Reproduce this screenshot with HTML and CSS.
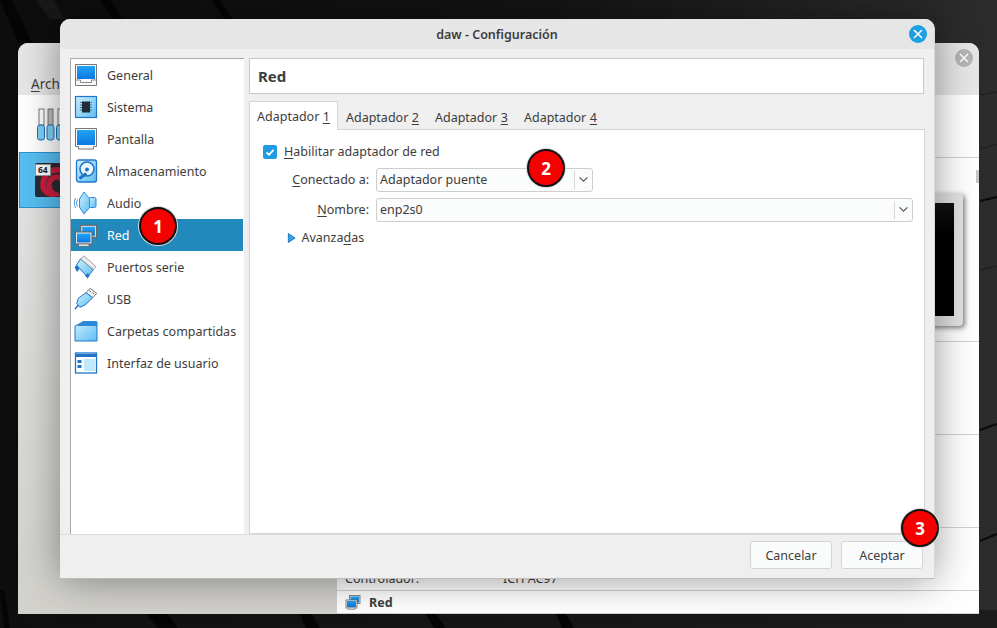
FILE: index.html
```html
<!DOCTYPE html>
<html lang="es">
<head>
<meta charset="utf-8">
<title>daw - Configuración</title>
<link rel="stylesheet" href="styles.css">
</head>
<body>
<svg class="wallpaper" viewBox="0 0 997 628" preserveAspectRatio="none" aria-hidden="true">
  <defs>
    <linearGradient id="wall" x1="0" y1="0" x2="1" y2="0"><stop offset="0" stop-color="#0d0d0d"/><stop offset=".55" stop-color="#141414"/><stop offset=".9" stop-color="#282828"/><stop offset="1" stop-color="#2c2c2c"/></linearGradient>
    <linearGradient id="wallbottom" x1="0" y1="0" x2="1" y2="0"><stop offset="0" stop-color="#0f0f0f"/><stop offset="1" stop-color="#1c1c1c"/></linearGradient>
  </defs>
  <rect width="997" height="628" fill="url(#wall)"/>
  <rect y="610" width="997" height="18" fill="url(#wallbottom)"/>
  <polygon points="0,0 12,0 32,43 18,43" fill="#050505"/>
  <polygon points="36,0 54,0 64,19 50,19" fill="#181818"/>
  <polygon points="100,0 110,0 122,19 112,19" fill="#050505"/>
  <polygon points="212,0 220,0 232,19 224,19" fill="#050505"/>
  <path d="M980 95L997 92M980 149L997 144M980 270L997 266" stroke="#1c1c1c" fill="none"/>
  <path d="M980 201L997 197M980 430L997 424M980 541L997 534" stroke="#0a0a0a" stroke-width="2" fill="none"/>
  <polygon points="146,614 168,614 178,628 158,628" fill="#050505"/>
  <polygon points="300,614 312,614 320,628 306,628" fill="#050505"/>
  <polygon points="426,614 436,614 446,628 434,628" fill="#050505"/>
  <polygon points="556,614 566,614 574,628 562,628" fill="#050505"/>
  <polygon points="0,590 4,590 10,628 4,628" fill="#050505"/>
</svg>

<section class="back-window">
  <div class="back-title"><span class="back-close"><svg viewBox="0 0 18 18"><path d="M5 5l8 8M13 5l-8 8" stroke="#fff" stroke-width="1.500"/></svg></span></div>
  <div class="back-menu"><span class="back-menu-item"><u>A</u>rchivo</span></div>
  <div class="back-body">
    <aside class="back-left">
      <div class="back-tools">
        <svg class="tools-icon" viewBox="0 0 30 36">
          <g fill="#fff" stroke="#777"><rect x="3" y="1" width="5" height="16"/><rect x="12" y="1" width="5" height="16" fill="#bbb"/><rect x="22" y="1" width="5" height="16"/></g>
          <g fill="#7fd0f5" stroke="#1f6fb5"><rect x="1.500" y="17" width="7" height="15" rx="2.500"/><rect x="11" y="17" width="7" height="15" rx="2.500"/><rect x="20.500" y="17" width="7" height="15" rx="2.500"/></g>
        </svg>
      </div>
      <div class="back-vm">
        <div class="vm-icon"><svg viewBox="0 0 30 32" class="vm-swirl"><path d="M24 5C13 3 6 11 6 20c0 6 5 10 11 9-4-2-5-6-5-9 0-5 4-8 8-8s6 3 6 7" fill="none" stroke="#c81e3e" stroke-width="5.500"/></svg><span class="vm-badge">64</span></div>
      </div>
    </aside>
    <main class="back-right">
      <span class="back-scroll"></span>
      <div class="back-row back-row-0"></div>
      <div class="back-row back-row-1"><div class="preview"><div class="preview-screen"></div></div></div>
      <div class="back-row back-row-2"></div>
      <div class="back-row back-row-3"></div>
      <div class="back-row back-row-4"><div class="back-audio"><span>Controlador:</span><span class="back-audio-val">ICH AC97</span></div></div>
      <div class="back-net">
        <svg class="icon-small" viewBox="0 0 32 32"><use href="#net"/></svg>
        <b>Red</b>
      </div>
    </main>
  </div>
</section>

<svg class="defs" aria-hidden="true">
  <defs>
    <linearGradient id="blue" x1="0" y1="0" x2="0" y2="1"><stop offset="0" stop-color="#23a4f4"/><stop offset="1" stop-color="#0a78e0"/></linearGradient>
    <linearGradient id="light" x1="0" y1="0" x2="1" y2="1"><stop offset="0" stop-color="#cdeefd"/><stop offset="1" stop-color="#5cbdf3"/></linearGradient>
    <symbol id="net" viewBox="0 0 32 32">
      <rect x="9" y="3" width="21" height="16" fill="#e8e8e8" stroke="#666" stroke-width="1.500"/>
      <rect x="11" y="5" width="17" height="12" fill="url(#blue)"/>
      <rect x="2" y="12" width="22" height="16" fill="#f2f2f2" stroke="#666" stroke-width="1.500"/>
      <rect x="4" y="14" width="18" height="12" fill="url(#blue)"/>
      <rect x="6" y="28" width="14" height="3" fill="#eee" stroke="#666"/>
    </symbol>
  </defs>
</svg>

<section class="dialog">
  <header class="dialog-title">
    <span>daw - Configuración</span>
    <span class="dialog-close"><svg viewBox="0 0 18 18"><path d="M5 5l8 8M13 5l-8 8" stroke="#fff" stroke-width="1.500"/></svg></span>
  </header>
  <div class="dialog-body">
    <nav class="side">
      <div class="side-item"><svg class="ico" viewBox="0 0 24 24"><path d="M1.500 1.500h21v21h-21z" fill="#f8f8f8" stroke="#777"/><path d="M3 3h18v13H3z" fill="url(#blue)"/><path d="M2 17h4.500v2.500h11V17H22" fill="none" stroke="#888"/></svg>General</div>
      <div class="side-item"><svg class="ico" viewBox="0 0 24 24"><rect x="1.500" y="1.500" width="21" height="21" fill="url(#light)" stroke="#1f76c8" stroke-width="1.200"/><path d="M6 7.500h12M6 10h12M6 12.500h12M6 15h12" stroke="#4f7391"/><rect x="8" y="6.500" width="8" height="11" fill="#222d3c"/></svg>Sistema</div>
      <div class="side-item"><svg class="ico" viewBox="0 0 24 24"><path d="M1.500 1.500h21v18h-3v2.500h-15v-2.500h-3z" fill="#f8f8f8" stroke="#777"/><path d="M3 3h18v15H3z" fill="url(#blue)"/></svg>Pantalla</div>
      <div class="side-item"><svg class="ico" viewBox="0 0 24 24"><rect x="2.500" y="1" width="20" height="22" rx="2" fill="url(#light)" stroke="#1f76c8" stroke-width="1.300"/><circle cx="13" cy="10" r="7" fill="#eaf8fe" stroke="#1f76c8" stroke-width="1.600"/><circle cx="13" cy="10.500" r="2" fill="#1f76c8"/><path d="M5.500 19.500l7-5" stroke="#1f76c8" stroke-width="3"/></svg>Almacenamiento</div>
      <div class="side-item"><svg class="ico" viewBox="0 0 24 24"><rect x="15" y="6.500" width="7" height="10" rx="1.500" fill="url(#light)" stroke="#2a8ad8"/><path d="M5.500 8L10 1l5.500 6.500v9L10 23l-4.500-7z" fill="url(#light)" stroke="#2a8ad8"/><path d="M3.500 8.500c-1.200 2-1.200 5 0 7M1.500 7c-1.500 3-1.500 7 0 10" fill="none" stroke="#2a8ad8" stroke-width=".9"/></svg>Audio</div>
      <div class="side-item is-active"><svg class="ico" viewBox="0 0 32 32"><use href="#net"/></svg>Red</div>
      <div class="side-item"><svg class="ico" viewBox="0 0 24 24"><path d="M6.500 4L19.500 14.500 13.500 22 2.500 10z" fill="url(#light)" stroke="#1f76c8"/><path d="M10 .8L22 11.700l-2.700 2.700L6.700 4z" fill="#eee" stroke="#888" stroke-width=".8"/><path d="M.5 12l2.500-2 2.500 4-2.500 3zM11 20.500l3-2.500 1.500 3-2 2.500z" fill="#1f76c8"/></svg>Puertos serie</div>
      <div class="side-item"><svg class="ico" viewBox="0 0 24 24"><path d="M16 1.300l6.700 5-4 4.400-6.700-5z" fill="#f2f2f2" stroke="#777"/><path d="M15.500 3.800l1.300 1M18.500 5.800l1.300 1" stroke="#444"/><path d="M12 5.700l6.700 5L11 18l-5 2.300-3.300-4 1.600-5z" fill="url(#light)" stroke="#1f76c8"/><path d="M4 18.500L1 22" stroke="#1f76c8" stroke-width="1.600"/></svg>USB</div>
      <div class="side-item"><svg class="ico" viewBox="0 0 24 24"><path d="M1 7l8-4h14v19H1z" fill="url(#light)" stroke="#1f76c8"/><path d="M9 2h14v5H3z" fill="#2a8ad8"/></svg>Carpetas compartidas</div>
      <div class="side-item"><svg class="ico" viewBox="0 0 24 24"><rect x="1.500" y="2" width="21" height="20" fill="#fff" stroke="#1f76c8" stroke-width="1.300"/><rect x="2" y="3" width="20" height="3" fill="#1f76c8"/><rect x="10" y="8" width="11" height="12" fill="#bfe8fb"/><path d="M3.500 9h4v3h-4zM3.500 14h4v3h-4z" fill="#1f76c8"/></svg>Interfaz de usuario</div>
    </nav>
    <div class="content">
      <h1 class="page-title">Red</h1>
      <div class="tabs">
        <span class="tab is-active">Adaptador <u>1</u></span>
        <span class="tab">Adaptador <u>2</u></span>
        <span class="tab">Adaptador <u>3</u></span>
        <span class="tab">Adaptador <u>4</u></span>
      </div>
      <div class="panel">
        <label class="check-row">
          <span class="check"><svg viewBox="0 0 14 14"><path d="M3.500 7.500l2.500 2.300 4.500-5" fill="none" stroke="#fff" stroke-width="1.800"/></svg></span>
          <span><u>H</u>abilitar adaptador de red</span>
        </label>
        <div class="form-row">
          <span class="form-label"><u>C</u>onectado a:</span>
          <div class="select select-short"><span class="select-inner">Adaptador puente</span><span class="caret"><svg viewBox="0 0 12 8"><path d="M1.500 1.500L6 6l4.500-4.500" fill="none" stroke="#555" stroke-width="1.300"/></svg></span></div>
        </div>
        <div class="form-row">
          <span class="form-label"><u>N</u>ombre:</span>
          <div class="select select-long"><span class="select-inner">enp2s0</span><span class="caret"><svg viewBox="0 0 12 8"><path d="M1.500 1.500L6 6l4.500-4.500" fill="none" stroke="#555" stroke-width="1.300"/></svg></span></div>
        </div>
        <div class="advanced"><svg class="tri" viewBox="0 0 10 12"><path d="M1.500 1l7.500 5-7.500 5z" fill="#35a4ef" stroke="#1c6fc0"/></svg><span>Avanza<u>d</u>as</span></div>
      </div>
    </div>
  </div>
  <footer class="dialog-foot">
    <button class="btn">Cancelar</button>
    <button class="btn">Aceptar</button>
  </footer>
</section>

<span class="badge badge-1">1</span>
<span class="badge badge-2">2</span>
<span class="badge badge-3">3</span>
</body>
</html>
```
FILE: styles.css
```css
* { box-sizing: border-box; }
html, body { margin: 0; height: 100%; }
body {
  width: 997px;
  height: 628px;
  position: relative;
  overflow: hidden;
  background: #121212;
  font-family: "Noto Sans", "Open Sans", sans-serif;
  font-size: 12.5px;
  color: #3d3d3d;
}
u { text-underline-offset: 2px; }
.defs { position: absolute; width: 0; height: 0; }
.wallpaper { position: absolute; inset: 0; width: 997px; height: 628px; }

.back-window {
  position: absolute;
  left: 18px;
  top: 43px;
  width: 961px;
  height: 571px;
  display: flex;
  flex-direction: column;
  border-radius: 10px 10px 0 0;
  overflow: hidden;
  background: #e6e6e6;
}
.back-title { height: 30px; position: relative; background: #e6e6e6; }
.back-close {
  position: absolute; right: 6px; top: 6px; width: 18px; height: 18px; border-radius: 50%;
  background: #b5b5b5;
}
.back-close svg { display: block; }
.back-menu { height: 22px; padding-left: 13px; background: #e6e6e6; font-size: 13.5px; line-height: 22px; }
.back-menu-item { white-space: nowrap; }
.back-body { flex: 1; display: flex; min-height: 0; }
.back-left { width: 319px; display: flex; flex-direction: column; background: linear-gradient(#e6e6e6, #d2d1cc); }
.back-tools { height: 57px; background: #fff; padding: 13px 0 0 18px; }
.tools-icon { display: block; width: 30px; height: 36px; }
.back-vm { height: 56px; margin-left: 1px; background: #58bff1; border: 1px solid #2f8fd0; padding: 10px 0 0 15px; }
.vm-icon { position: relative; width: 34px; height: 34px; background: #2b2b33; border-radius: 2px; }
.vm-badge {
  position: absolute; left: 0; top: 1px; background: #fff; color: #222; font-size: 8.5px; font-weight: 700;
  line-height: 10px; padding: 0 2px; border: 1px solid #999;
}
.vm-swirl { position: absolute; left: 2px; top: 2px; width: 30px; height: 32px; }
.back-right { flex: 1; min-width: 0; display: flex; flex-direction: column; background: #fff; position: relative; }
.back-scroll { position: absolute; right: 0; top: 75px; width: 3px; height: 13px; background: #c8c8c8; }
.back-row { border-bottom: 1px solid #d2d2d2; flex: none; background: #fff; }
.back-row-0 { height: 63px; }
.back-row-1 { height: 184px; display: flex; justify-content: flex-end; align-items: flex-end; padding: 0 16px 15px 0; }
.back-row-2 { height: 93px; }
.back-row-3 { height: 93px; }
.back-row-4 { height: 63px; display: flex; align-items: flex-end; padding-bottom: 4px; }
.back-audio { padding-left: 8px; display: flex; line-height: 14px; }
.back-audio span:first-child { width: 158px; }
.preview {
  width: 180px; height: 133px; background: #e2e2e2; border-radius: 4px;
  box-shadow: 2px 2px 5px rgba(0,0,0,.5); padding: 10px 9px 10px 10px;
}
.preview-screen { height: 100%; background: linear-gradient(#111, #000 30%); }
.back-net { display: flex; align-items: center; gap: 8px; padding-left: 8px; flex: 1; border-bottom: 1px solid #d2d2d2; }
.back-net b { font-weight: 700; font-size: 12.5px; }
.icon-small { width: 16px; height: 16px; }

.dialog {
  position: absolute;
  left: 60px;
  top: 19px;
  width: 875px;
  height: 560px;
  display: flex;
  flex-direction: column;
  background: #efefef;
  border-radius: 10px 10px 0 0;
  border-bottom: 1px solid #bdbdbd;
  border-right: 1px solid #d8d8d8;
  box-shadow: 0 0 40px rgba(0,0,0,.42);
  overflow: hidden;
}
.dialog-title {
  height: 30px;
  flex: none;
  position: relative;
  display: flex;
  justify-content: center;
  align-items: center;
  background: #e6e6e6;
  font-weight: 600;
  font-size: 12.5px;
}
.dialog-close {
  position: absolute; right: 7px; top: 6px; width: 18px; height: 18px; border-radius: 50%;
  background: #1d9fe0;
}
.dialog-close svg { display: block; }
.dialog-body { flex: 1; min-height: 0; display: flex; padding: 9px 9px 0 10px; gap: 5px; }
.side {
  width: 174px;
  height: 477px;
  flex: none;
  background: #fff;
  border: 1px solid #a8a8a8;
  border-right: 0;
  border-bottom: 0;
}
.side-item { height: 32px; display: flex; align-items: center; gap: 9px; padding-left: 3px; white-space: nowrap; }
.side-item.is-active { background: #2289bd; color: #fff; margin-right: 1px; }
.ico { width: 24px; height: 24px; flex: none; }
.content { flex: 1; min-width: 0; display: flex; flex-direction: column; }
.page-title {
  margin: 0 1px 0 0; height: 36px; padding-left: 8px; display: flex; align-items: center;
  font-size: 15px; font-weight: 700; background: #fff; border: 1px solid #c8c8c8;
}
.tabs { display: flex; margin-top: 7px; height: 29px; position: relative; z-index: 1; }
.tab { height: 29px; padding: 3px 8px 0; display: flex; align-items: center; gap: 3.500px; white-space: nowrap; }
.tab.is-active { background: #fff; border: 1px solid #d4d4d4; border-bottom: 0; padding: 1px 7px 0; }
.panel {
  flex: 1; margin-top: -1px; background: #fff; border: 1px solid #d4d4d4; padding: 13px 11px 0 13px;
  display: flex; flex-direction: column;
}
.check-row { display: flex; align-items: center; gap: 7px; height: 17px; }
.check { width: 14px; height: 14px; border-radius: 2px; background: #1f9be0; display: block; }
.check svg { display: block; }
.form-row { display: flex; align-items: center; gap: 7px; margin-top: 7px; height: 25px; }
.form-row + .form-row { margin-top: 5px; }
.form-label { width: 106px; text-align: right; white-space: nowrap; }
.select {
  height: 24px; display: flex; align-items: stretch; background: #fbfcfc; border: 1px solid #cdcdcd; border-radius: 3px;
}
.select-short { width: 217px; }
.select-long { flex: 1; }
.select-inner { flex: 1; padding-left: 3px; line-height: 22px; }
.caret { width: 18px; border-left: 1px solid #d8d8d8; margin: 2px 0; display: flex; align-items: center; justify-content: center; }
.caret svg { width: 11px; height: 7px; }
.advanced { display: flex; align-items: center; gap: 5.500px; margin: 7px 0 0 24px; height: 17px; }
.tri { width: 9px; height: 12px; }
.dialog-foot { height: 44px; flex: none; display: flex; justify-content: flex-end; gap: 9px; padding: 6px 11px 0 0; border-top: 1px solid #dcdcdc; position: relative; }
.btn {
  width: 82px; height: 28px; background: #fafbfb; border: 1px solid #d4d4d4; border-radius: 3px;
  font: inherit; color: inherit; padding: 0;
}

.badge {
  position: absolute; width: 38px; height: 38px; border-radius: 50%;
  background: #f40000; color: #fff; font-size: 17px; font-weight: 700; text-align: center; line-height: 35px;
  border: 2px solid #111; box-shadow: 0 0 0 1px #d8d8d8; font-family: "Noto Sans", sans-serif;
}
.badge-1 { left: 139px; top: 207px; }
.badge-2 { left: 527px; top: 149px; }
.badge-3 { left: 901px; top: 509px; }
```
